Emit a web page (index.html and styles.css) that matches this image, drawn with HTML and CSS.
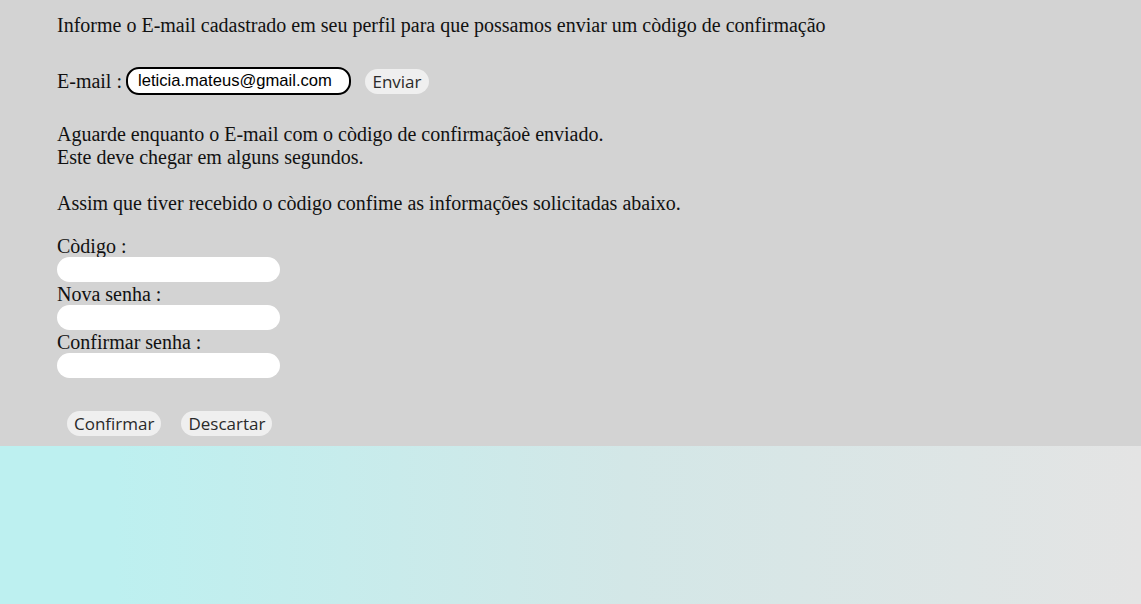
FILE: index.html
```html
<!DOCTYPE html>
<html lang="pt">
<head>
<meta charset="utf-8">
<title>Recuperar senha</title>
<link rel="stylesheet" href="styles.css">
</head>
<body>
<main class="panel">
  <p class="intro">Informe o E-mail cadastrado em seu perfil para que possamos enviar um còdigo de confirmação</p>
  <div class="email-row">
    <label class="email-label" for="email">E-mail :</label>
    <input class="email-input" id="email" type="text" value="leticia.mateus@gmail.com">
    <button class="pill-btn send-btn" type="button">Enviar</button>
  </div>
  <p class="wait">Aguarde enquanto o E-mail com o còdigo de confirmaçãoè enviado.<br>Este deve chegar em alguns segundos.</p>
  <p class="instr">Assim que tiver recebido o còdigo confime as informações solicitadas abaixo.</p>
  <div class="fields">
    <label class="field-label" for="codigo">Còdigo :</label>
    <input class="field-input" id="codigo" type="text">
    <label class="field-label" for="nova">Nova senha :</label>
    <input class="field-input" id="nova" type="password">
    <label class="field-label" for="conf">Confirmar senha :</label>
    <input class="field-input" id="conf" type="password">
  </div>
  <div class="actions">
    <button class="pill-btn" type="button">Confirmar</button>
    <button class="pill-btn" type="button">Descartar</button>
  </div>
</main>
<footer class="gradient"></footer>
</body>
</html>
```

FILE: styles.css
```css
html, body {
  margin: 0;
  padding: 0;
  height: 100%;
}

body {
  display: flex;
  flex-direction: column;
  font-family: "Liberation Serif", "Times New Roman", serif;
  font-size: 20px;
  line-height: 23px;
  color: #111;
}

.panel {
  background: #d3d3d3;
  padding: 14px 0 10px 57px;
  height: 446px;
  box-sizing: border-box;
}

.intro {
  margin: 0;
}

.email-row {
  display: flex;
  align-items: center;
  margin-top: 30px;
  height: 28px;
}

.email-label {
  margin-right: 4px;
}

.email-input {
  box-sizing: border-box;
  width: 225px;
  height: 28px;
  border: 2px solid #000;
  border-radius: 13px;
  padding: 0 10px;
  background: #fff;
  font-family: "Liberation Sans", Arial, sans-serif;
  font-size: 16.6px;
  color: #000;
  outline: none;
}

.send-btn {
  margin-left: 14px;
  width: 64px;
}

.pill-btn {
  box-sizing: border-box;
  height: 25px;
  border: none;
  border-radius: 13px;
  background: #efefef;
  font-family: "Open Sans", "Noto Sans", sans-serif;
  font-size: 17px;
  line-height: 25px;
  color: #2a2a2a;
  padding: 0 7px;
  cursor: pointer;
}

.wait {
  margin: 28px 0 0;
}

.instr {
  margin: 23px 0 0;
}

.fields {
  display: flex;
  flex-direction: column;
  align-items: flex-start;
  margin-top: 20px;
}

.field-label {
  line-height: 22px;
}

.field-input {
  box-sizing: border-box;
  width: 223px;
  height: 25px;
  border: none;
  border-radius: 13px;
  background: #fff;
  margin-bottom: 1px;
  outline: none;
}

.actions {
  display: flex;
  gap: 20px;
  margin: 32px 0 0 10px;
}

.gradient {
  flex: 1;
  background: linear-gradient(to right, #bdf0f0 0%, #bdf0f0 10%, #d3e7e7 55%, #e4e4e4 100%);
}
```
